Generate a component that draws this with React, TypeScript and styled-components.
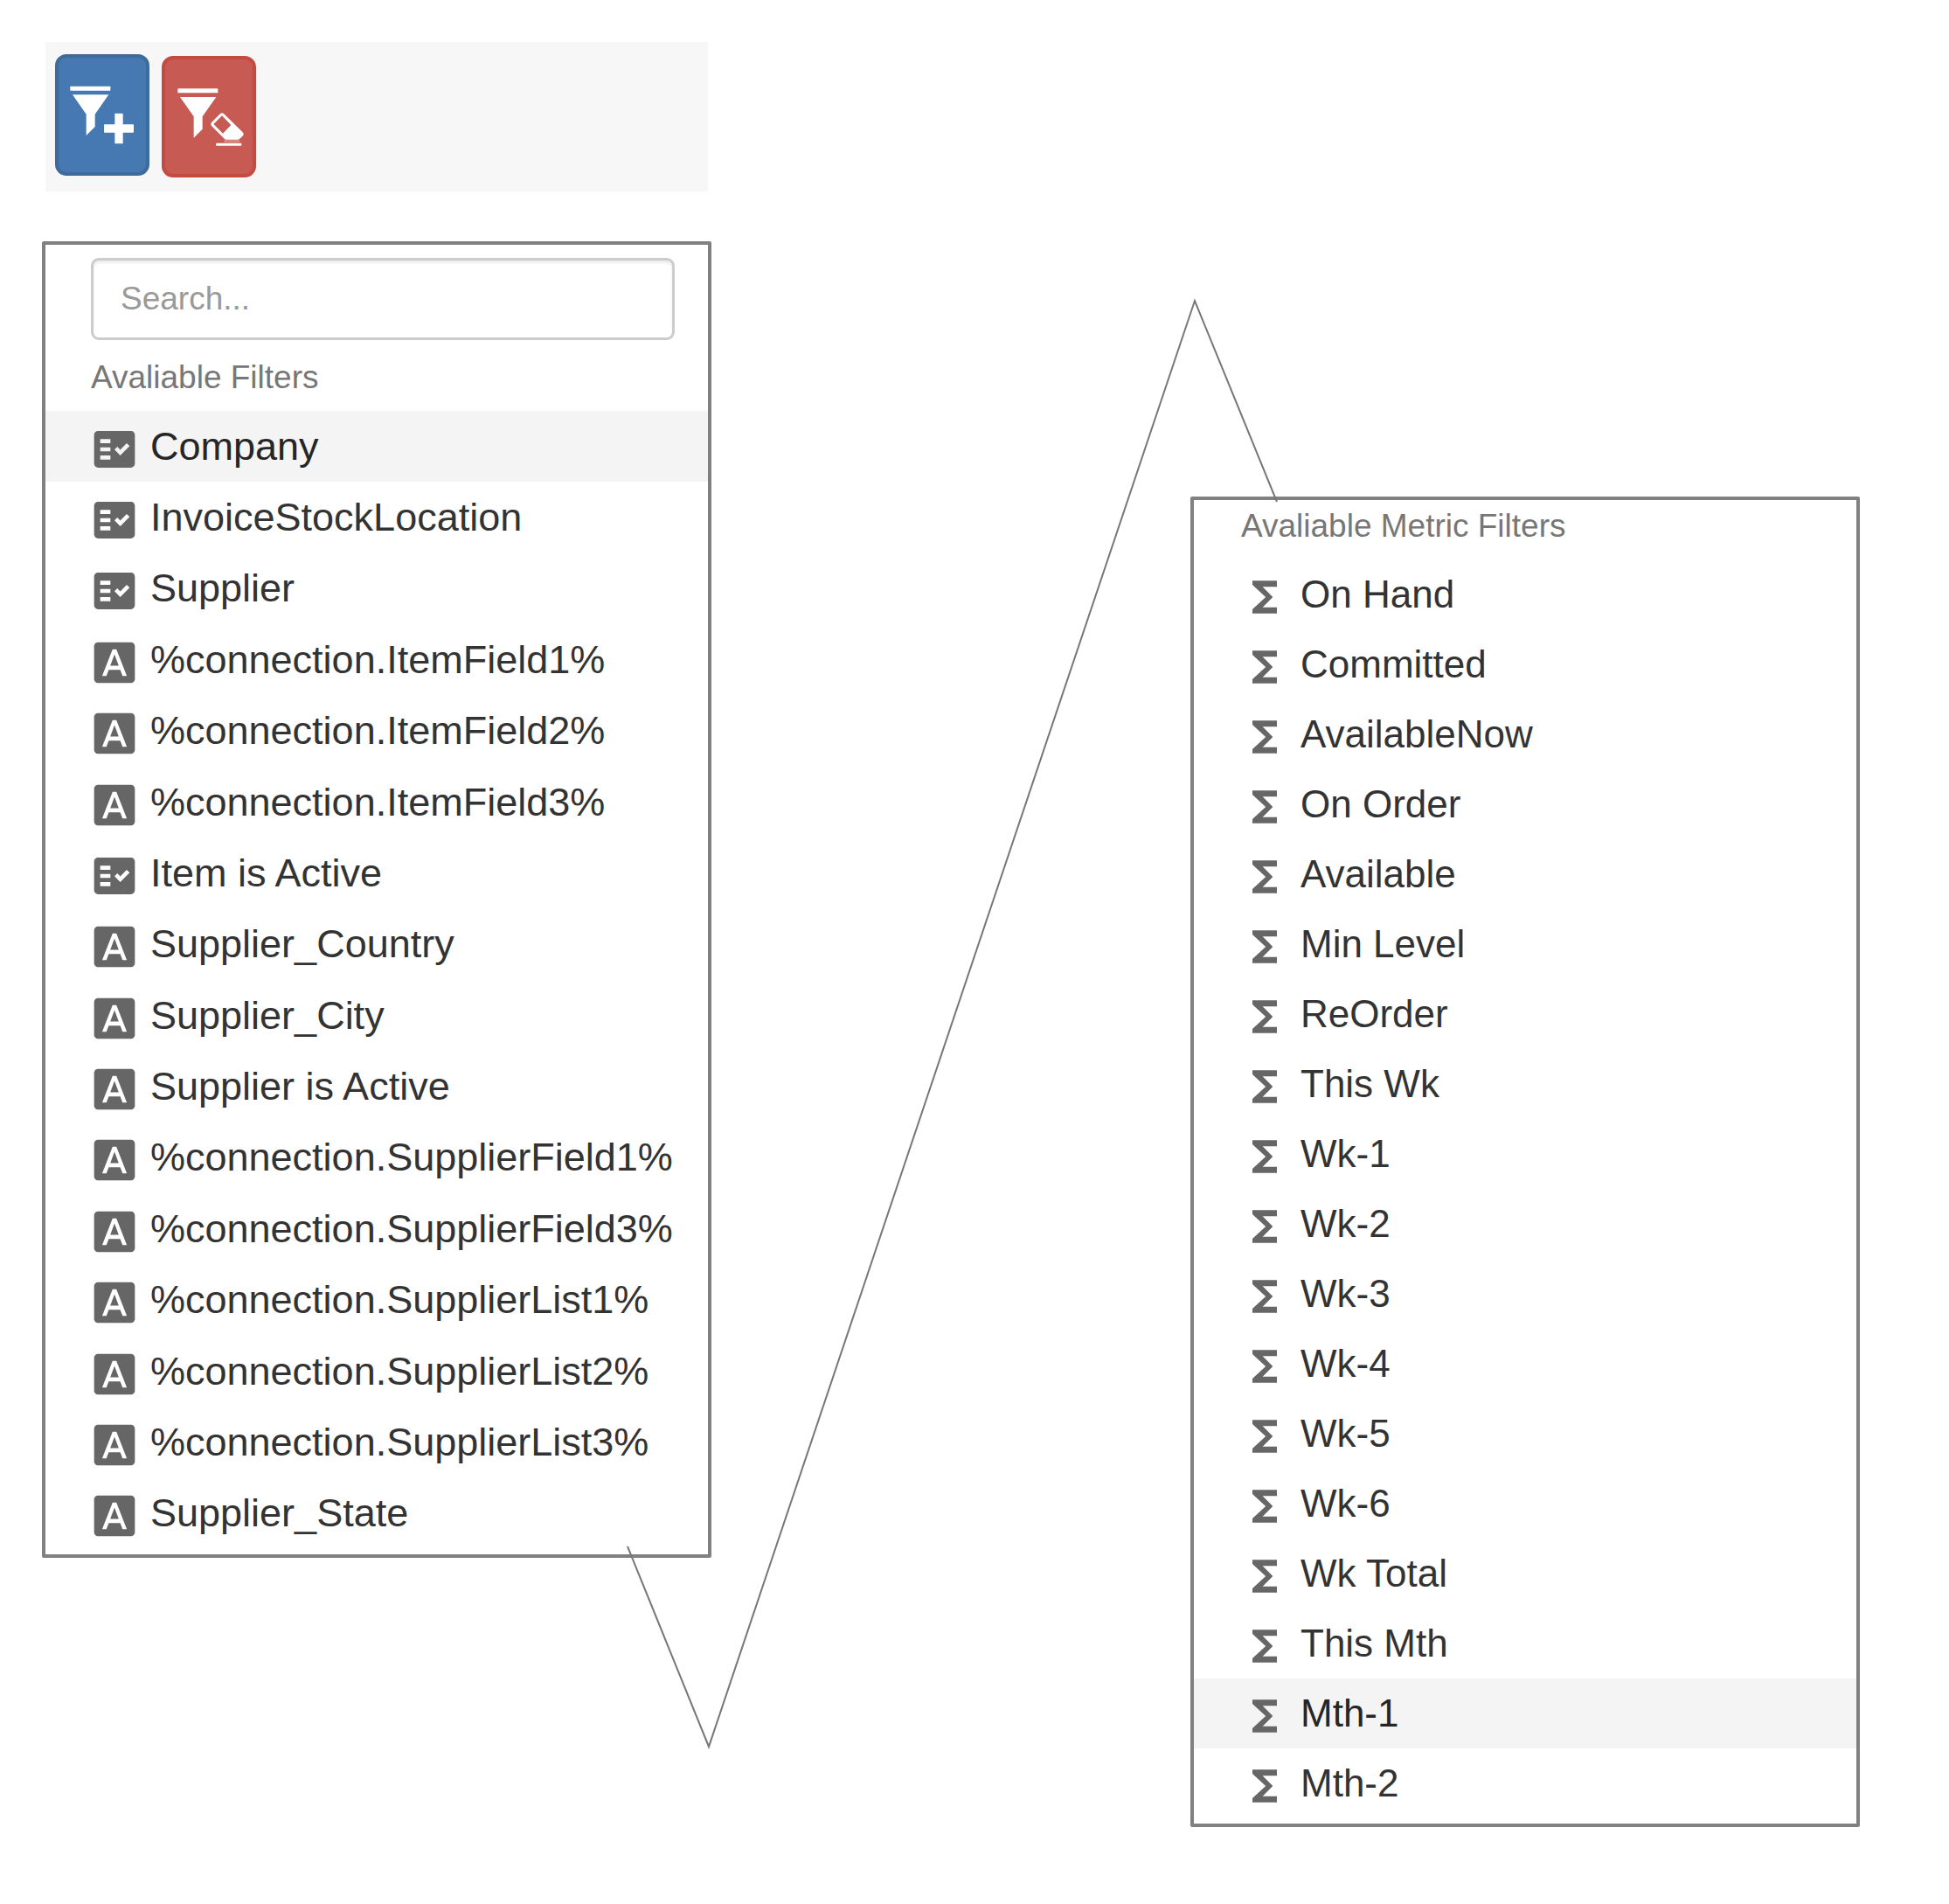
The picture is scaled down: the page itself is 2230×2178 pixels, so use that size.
import React, { useState } from "react";
import styled, { createGlobalStyle } from "styled-components";
import { MdFactCheck, MdFontDownload, MdFunctions } from "react-icons/md";

const GlobalStyle = createGlobalStyle`
  *, *::before, *::after { box-sizing: border-box; }
  body {
    margin: 0;
    background: #fff;
    color: #333;
    font-family: "Liberation Sans", Arial, Helvetica, sans-serif;
  }
`;

const Page = styled.main`
  position: relative;
  display: grid;
  grid-template-columns: 766fr 766fr;
  column-gap: 548px;
  align-items: start;
  padding: 48px 102px 88px 48px;
`;

const LeftColumn = styled.div`
  display: flex;
  flex-direction: column;
  gap: 57px;
`;

const RightColumn = styled.div`
  padding-top: 520px;
`;

const Toolbar = styled.div`
  display: flex;
  align-items: flex-start;
  gap: 14px;
  margin: 0 4px;
  padding: 14px 11px 16px;
  background: #f7f7f7;
`;

const ToolButton = styled.button<{ $tone: "primary" | "danger" }>`
  display: flex;
  align-self: ${(p) => (p.$tone === "danger" ? "flex-end" : "flex-start")};
  margin-bottom: ${(p) => (p.$tone === "danger" ? "0" : "2px")};
  padding: 0;
  border: 4px solid ${(p) => (p.$tone === "danger" ? "#c34b41" : "#3f6b9b")};
  border-radius: 13px;
  background: ${(p) => (p.$tone === "danger" ? "#c75b53" : "#4678b1")};
  color: #fff;
  cursor: pointer;
`;

const ToolIcon = styled.svg`
  display: block;
  width: 100px;
  height: 131px;
  fill: currentColor;
`;

const Panel = styled.section`
  border: 4px solid #808080;
  border-radius: 2px;
  padding-bottom: 6px;
  background: #fff;
`;

const SearchBar = styled.div`
  padding: 15px 38px 13px 52px;
`;

const SearchInput = styled.input`
  display: block;
  width: 100%;
  height: 94px;
  padding: 0 31px;
  border: 3px solid #ccc;
  border-radius: 9px;
  box-shadow: inset 0 3px 3px rgba(0, 0, 0, 0.075);
  background: #fff;
  color: #333;
  font-family: inherit;
  font-size: 37px;

  &::placeholder {
    color: #999;
    opacity: 1;
  }
`;

const PanelTitle = styled.h2<{ $inset: number }>`
  margin: 0;
  padding: 3px ${(p) => p.$inset}px 11px;
  color: #777;
  font-size: 37px;
  font-weight: 400;
  line-height: 54px;
`;

const OptionList = styled.ul<{ $minHeight: number }>`
  display: grid;
  grid-auto-rows: 1fr;
  min-height: ${(p) => p.$minHeight}px;
  margin: 0;
  padding: 0;
  list-style: none;
`;

const Option = styled.li`
  display: flex;
`;

const OptionButton = styled.button<{ $active: boolean; $size: number; $inset: number }>`
  display: flex;
  flex: 1;
  align-items: center;
  gap: 13px;
  padding: 0 0 0 ${(p) => p.$inset}px;
  border: 0;
  background: ${(p) => (p.$active ? "#f4f4f4" : "transparent")};
  color: ${(p) => (p.$active ? "#262626" : "#333")};
  font-family: inherit;
  font-size: ${(p) => p.$size}px;
  line-height: 60px;
  text-align: left;
  white-space: nowrap;
  cursor: pointer;

  svg {
    flex: none;
    width: 56px;
    height: 56px;
    margin-top: 6px;
    color: #666;
  }
`;

const Connector = styled.svg`
  position: absolute;
  inset: 0;
  width: 100%;
  height: 100%;
  pointer-events: none;

  polyline {
    fill: none;
    stroke: #777;
    stroke-width: 2;
    vector-effect: non-scaling-stroke;
  }
`;

type Kind = "list" | "text" | "metric";

const icons = {
  list: MdFactCheck,
  text: MdFontDownload,
  metric: MdFunctions,
};

const filters: { label: string; kind: Kind }[] = [
  { label: "Company", kind: "list" },
  { label: "InvoiceStockLocation", kind: "list" },
  { label: "Supplier", kind: "list" },
  { label: "%connection.ItemField1%", kind: "text" },
  { label: "%connection.ItemField2%", kind: "text" },
  { label: "%connection.ItemField3%", kind: "text" },
  { label: "Item is Active", kind: "list" },
  { label: "Supplier_Country", kind: "text" },
  { label: "Supplier_City", kind: "text" },
  { label: "Supplier is Active", kind: "text" },
  { label: "%connection.SupplierField1%", kind: "text" },
  { label: "%connection.SupplierField3%", kind: "text" },
  { label: "%connection.SupplierList1%", kind: "text" },
  { label: "%connection.SupplierList2%", kind: "text" },
  { label: "%connection.SupplierList3%", kind: "text" },
  { label: "Supplier_State", kind: "text" },
];

const metrics: { label: string; kind: Kind }[] = [
  "On Hand",
  "Committed",
  "AvailableNow",
  "On Order",
  "Available",
  "Min Level",
  "ReOrder",
  "This Wk",
  "Wk-1",
  "Wk-2",
  "Wk-3",
  "Wk-4",
  "Wk-5",
  "Wk-6",
  "Wk Total",
  "This Mth",
  "Mth-1",
  "Mth-2",
].map((label) => ({ label, kind: "metric" }));

function Options(props: {
  items: { label: string; kind: Kind }[];
  initial: string;
  size: number;
  inset: number;
  minHeight: number;
}) {
  const [active, setActive] = useState(props.initial);
  return (
    <OptionList $minHeight={props.minHeight}>
      {props.items.map(({ label, kind }) => {
        const Icon = icons[kind];
        return (
          <Option key={label}>
            <OptionButton
              type="button"
              $active={label === active}
              $size={props.size}
              $inset={props.inset}
              onClick={() => setActive(label)}
            >
              <Icon aria-hidden="true" />
              {label}
            </OptionButton>
          </Option>
        );
      })}
    </OptionList>
  );
}

function Funnel() {
  return (
    <>
      <rect x="52" y="110" width="138" height="15" rx="2" />
      <path d="M60 139H184L137 206V249L107 279V206Z" />
    </>
  );
}

export default function App() {
  return (
    <>
      <GlobalStyle />
      <Page>
        <LeftColumn>
          <Toolbar>
            <ToolButton type="button" $tone="primary" aria-label="Add filter">
              <ToolIcon viewBox="12 12 300 393" aria-hidden="true">
                <Funnel />
                <path d="M205 205q0-2 2-2h24q2 0 2 2v36h35q2 0 2 2v24q0 2-2 2h-35v36q0 2-2 2h-24q-2 0-2-2v-36h-35q-2 0-2-2v-24q0-2 2-2h35z" />
              </ToolIcon>
            </ToolButton>
            <ToolButton type="button" $tone="danger" aria-label="Clear filters">
              <ToolIcon viewBox="12 12 300 393" aria-hidden="true">
                <g transform="translate(3 2)">
                  <Funnel />
                </g>
                <path
                  fillRule="evenodd"
                  d="M201 198q6-4 12 0L278 262q5 6 1 12L268 284q-3 3-7 3H222q-4 0-7-3L171 240q-4-6 0-12ZM207 205L178 234L210 266L238 237Z"
                />
                <rect x="214" y="287" width="54" height="10" opacity="0.25" />
                <rect x="186" y="299" width="88" height="9" rx="3" />
              </ToolIcon>
            </ToolButton>
          </Toolbar>
          <Panel>
            <SearchBar>
              <SearchInput type="text" placeholder="Search..." aria-label="Search filters" />
            </SearchBar>
            <PanelTitle $inset={52}>Avaliable Filters</PanelTitle>
            <Options items={filters} initial="Company" size={45} inset={51} minHeight={1302} />
          </Panel>
        </LeftColumn>
        <RightColumn>
          <Panel>
            <PanelTitle $inset={54}>Avaliable Metric Filters</PanelTitle>
            <Options items={metrics} initial="Mth-1" size={44} inset={53} minHeight={1440} />
          </Panel>
        </RightColumn>
        <Connector viewBox="0 0 2230 2178" preserveAspectRatio="none" aria-hidden="true">
          <polyline points="718,1769 811,1998 1367,344 1461,574" />
        </Connector>
      </Page>
    </>
  );
}
